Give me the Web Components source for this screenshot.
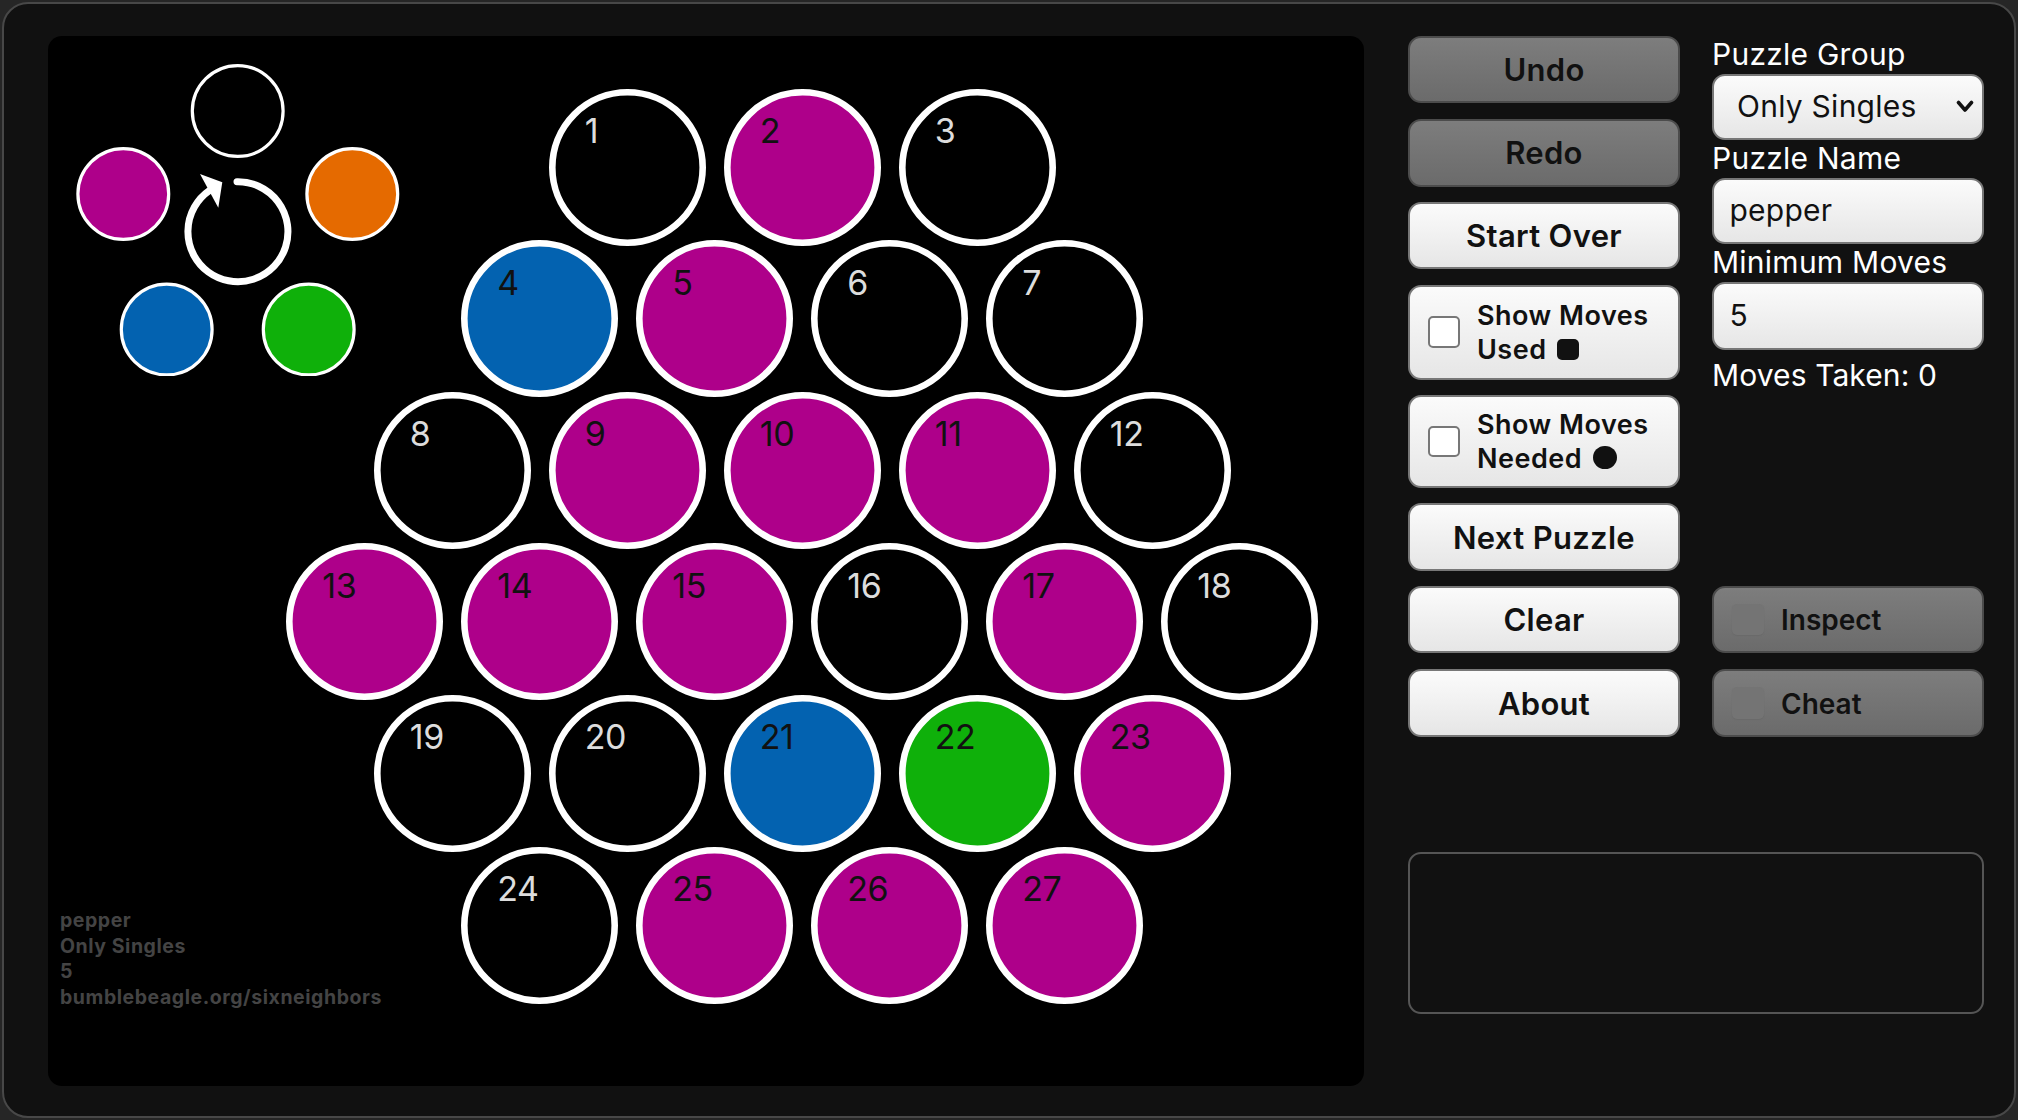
<!DOCTYPE html>
<html>
<head>
<meta charset="utf-8">
<title>Six Neighbors</title>
<style>
  html, body { margin: 0; padding: 0; width: 2018px; height: 1120px; overflow: hidden; background: #262626; }
  body { font-family: Inter, "Liberation Sans", sans-serif; }
</style>
</head>
<body>
<six-app></six-app>
<script>
const FONT = 'Inter, "Liberation Sans", sans-serif';
const COLORS = {
  none: "transparent",
  purple: "#ae008a",
  blue: "#0362b0",
  green: "#0fb00a",
  orange: "#e56a00",
};

class HexCell extends HTMLElement {
  connectedCallback() {
    const color = COLORS[this.getAttribute("color") || "none"];
    const dark = this.getAttribute("color") ? "#111" : "#ddd";
    this.attachShadow({ mode: "open" }).innerHTML = `
    <style>
      :host { display: block; position: relative; width: 157px; height: 157px; flex: none; }
      svg { display: block; }
      span {
        position: absolute; left: 36px; top: 22.4px;
        font: 400 34px/40px ${FONT}; color: ${dark}; letter-spacing: -0.5px;
      }
    </style>
    <svg width="157" height="157" viewBox="0 0 157 157">
      <circle cx="78.5" cy="78.5" r="75.2" fill="${color}" stroke="#fff" stroke-width="6.6"/>
    </svg>
    <span>${this.getAttribute("n")}</span>`;
  }
}

class HexBoard extends HTMLElement {
  connectedCallback() {
    // color of each cell, row by row; "" is an empty cell
    const p = "purple", b = "blue", g = "green", e = "";
    const rows = [
      [500.8, [e, p, e]],
      [413.3, [b, p, e, e]],
      [325.8, [e, p, p, p, e]],
      [238.3, [p, p, p, e, p, e]],
      [325.8, [e, e, b, g, p]],
      [413.3, [e, p, p, p]],
    ];
    let n = 0;
    const html = rows.map(([left, cells]) =>
      `<div class="row" style="padding-left:${left}px">` +
      cells.map((c) => `<hex-cell n="${++n}" color="${c}"></hex-cell>`).join("") +
      `</div>`).join("");
    this.attachShadow({ mode: "open" }).innerHTML = `
    <style>
      :host { display: block; padding-top: 52.5px; }
      .row { display: flex; gap: 18px; height: 151.65px; }
    </style>
    ${html}`;
  }
}

class ColorWheel extends HTMLElement {
  connectedCallback() {
    this.attachShadow({ mode: "open" }).innerHTML = `
    <style>
      :host { display: block; position: absolute; left: 0; top: 0; }
      svg { display: block; }
    </style>
    <svg width="420" height="340" viewBox="48 36 420 340">
      <g stroke="#fff" stroke-width="3.2">
        <circle cx="237.7" cy="111" r="45.4" fill="#000"/>
        <circle cx="352.3" cy="194" r="45.4" fill="${COLORS.orange}"/>
        <circle cx="308.7" cy="329.5" r="45.4" fill="${COLORS.green}"/>
        <circle cx="166.7" cy="329.5" r="45.4" fill="${COLORS.blue}"/>
        <circle cx="123.3" cy="194" r="45.4" fill="${COLORS.purple}"/>
      </g>
      <path d="M237 181.7A50 50 0 1 1 209.3 190.7" fill="none" stroke="#fff" stroke-width="7" stroke-linecap="round"/>
      <polygon points="200,174 222.3,182.3 218.3,207.7" fill="#fff"/>
    </svg>`;
  }
}

class BoardCaption extends HTMLElement {
  connectedCallback() {
    this.attachShadow({ mode: "open" }).innerHTML = `
    <style>
      :host {
        display: block; position: absolute; left: 12px; top: 872px;
        font: 700 19.5px/25.7px ${FONT}; letter-spacing: 0.55px; color: #444;
      }
    </style>
    <slot></slot>`;
  }
}

class GameBoard extends HTMLElement {
  connectedCallback() {
    this.attachShadow({ mode: "open" }).innerHTML = `
    <style>
      :host {
        display: block; position: relative; flex: none; box-sizing: border-box;
        width: 1316px; height: 1050px; background: #000; border-radius: 14px;
      }
    </style>
    <color-wheel></color-wheel>
    <hex-board></hex-board>
    <slot></slot>`;
  }
}

class PanelButton extends HTMLElement {
  connectedCallback() {
    const h = this.getAttribute("h") || 67;
    this.attachShadow({ mode: "open" }).innerHTML = `
    <style>
      :host {
        display: flex; align-items: center; justify-content: center; box-sizing: border-box;
        width: 272px; height: ${h}px; flex: none; padding-top: 1.5px;
        border: 2px solid #777; border-radius: 13px;
        background: linear-gradient(#fbfbfb, #e6e6e6);
        color: #111; font: 600 31px/34px ${FONT}; letter-spacing: 0.3px;
      }
      :host([disabled]) {
        border-color: #4c4c4c;
        background: linear-gradient(#7d7d7d, #6b6b6b);
      }
    </style>
    <slot></slot>`;
  }
}

class ToggleButton extends HTMLElement {
  connectedCallback() {
    const h = this.getAttribute("h") || 67;
    const off = this.hasAttribute("disabled");
    const size = off ? "font-size: 28px; letter-spacing: 0;" : "";
    this.attachShadow({ mode: "open" }).innerHTML = `
    <style>
      :host {
        display: flex; align-items: center; box-sizing: border-box;
        width: 272px; height: ${h}px; flex: none; padding-left: 18px;
        border: 2px solid #777; border-radius: 13px;
        background: linear-gradient(#fbfbfb, #e6e6e6);
        color: #111; font: 600 27px/34px ${FONT}; letter-spacing: 0.5px; ${size}
      }
      :host([disabled]) {
        border-color: #4c4c4c;
        background: linear-gradient(#7d7d7d, #6b6b6b);
      }
      .box {
        flex: none; box-sizing: border-box; width: 31.5px; height: 31.5px; margin-right: 17.5px;
        border: 2px solid #777; border-radius: 5px; background: #fff;
      }
      .text { padding-top: 1.5px; }
      :host([disabled]) .box {
        border: 0; background: #747474; box-shadow: 0 1px 1px #6a6a6a;
      }
    </style>
    <div class="box"></div>
    <div class="text"><slot></slot></div>`;
  }
}

class MoveMark extends HTMLElement {
  connectedCallback() {
    const round = this.getAttribute("shape") === "round";
    this.attachShadow({ mode: "open" }).innerHTML = `
    <style>
      :host {
        display: inline-block; vertical-align: -1px; background: #111;
        margin-left: ${round ? 11 : 10}px;
        width: ${round ? 23.5 : 22}px; height: ${round ? 23 : 21}px;
        border-radius: ${round ? "50%" : "5px"};
      }
    </style>`;
  }
}

class FieldBox extends HTMLElement {
  connectedCallback() {
    const h = this.getAttribute("h") || 66.5;
    const pick = this.hasAttribute("select");
    this.attachShadow({ mode: "open" }).innerHTML = `
    <style>
      :host { display: block; flex: none; width: 272px; font: 400 30px/37.5px ${FONT}; letter-spacing: 0.25px; color: #fff; }
      .label { height: 37.5px; white-space: nowrap; }
      .box {
        display: flex; align-items: center; justify-content: space-between; box-sizing: border-box;
        height: ${h}px; padding: 0 8px 0 ${pick ? 23 : 15.5}px;
        border: 2px solid #777; border-radius: 13px;
        background: linear-gradient(#fbfbfb, #e6e6e6); color: #111;
      }
      svg { display: block; flex: none; }
    </style>
    <div class="label">${this.getAttribute("label")}</div>
    <div class="box">
      <span><slot></slot></span>
      ${pick ? `<svg width="18" height="13" viewBox="0 0 18 13"><path d="M2.5 2.5L9 10L15.5 2.5" fill="none" stroke="#111" stroke-width="3.6" stroke-linecap="round" stroke-linejoin="round"/></svg>` : ""}
    </div>`;
  }
}

class MessageBox extends HTMLElement {
  connectedCallback() {
    this.attachShadow({ mode: "open" }).innerHTML = `
    <style>
      :host {
        display: block; box-sizing: border-box; width: 576px; height: 162px;
        border: 2px solid #555; border-radius: 13px;
      }
    </style>
    <slot></slot>`;
  }
}

class ControlPanel extends HTMLElement {
  connectedCallback() {
    this.attachShadow({ mode: "open" }).innerHTML = `
    <style>
      :host { display: block; flex: none; width: 576px; }
      .cols { display: grid; grid-template-columns: 272px 272px; column-gap: 32px; height: 701px; }
      .left { display: flex; flex-direction: column; gap: 15.5px; }
      .right { display: flex; flex-direction: column; }
      .taken { margin-top: 8px; font: 400 30px/34px ${FONT}; letter-spacing: 0.1px; color: #fff; }
      .spacer { flex: 1; }
      .pair { display: flex; flex-direction: column; gap: 15.5px; }
      .msg { margin-top: 115px; }
    </style>
    <div class="cols">
      <div class="left"><slot name="left"></slot></div>
      <div class="right">
        <slot name="fields"></slot>
        <div class="taken">Moves Taken: 0</div>
        <div class="spacer"></div>
        <div class="pair"><slot name="dev"></slot></div>
      </div>
    </div>
    <div class="msg"><message-box></message-box></div>`;
  }
}

class SixApp extends HTMLElement {
  connectedCallback() {
    this.attachShadow({ mode: "open" }).innerHTML = `
    <style>
      :host {
        display: flex; gap: 44px; box-sizing: border-box; margin: 2px;
        width: 2014px; height: 1116px; padding: 32px 0 0 44px;
        background: #111; border: 2px solid #484848; border-radius: 26px;
      }
    </style>
    <game-board>
      <board-caption>pepper<br>Only Singles<br>5<br>bumblebeagle.org/sixneighbors</board-caption>
    </game-board>
    <control-panel>
      <panel-button slot="left" disabled>Undo</panel-button>
      <panel-button slot="left" h="68" disabled>Redo</panel-button>
      <panel-button slot="left">Start Over</panel-button>
      <toggle-button slot="left" h="95"><div>Show Moves<br>Used<move-mark></move-mark></div></toggle-button>
      <toggle-button slot="left" h="92.5"><div>Show Moves<br>Needed<move-mark shape="round"></move-mark></div></toggle-button>
      <panel-button slot="left" h="67.5">Next Puzzle</panel-button>
      <panel-button slot="left">Clear</panel-button>
      <panel-button slot="left" h="68.5">About</panel-button>
      <field-box slot="fields" label="Puzzle Group" select>Only Singles</field-box>
      <field-box slot="fields" label="Puzzle Name">pepper</field-box>
      <field-box slot="fields" label="Minimum Moves" h="68">5</field-box>
      <toggle-button slot="dev" disabled>Inspect</toggle-button>
      <toggle-button slot="dev" h="68.5" disabled>Cheat</toggle-button>
    </control-panel>`;
  }
}

customElements.define("hex-cell", HexCell);
customElements.define("hex-board", HexBoard);
customElements.define("color-wheel", ColorWheel);
customElements.define("board-caption", BoardCaption);
customElements.define("game-board", GameBoard);
customElements.define("panel-button", PanelButton);
customElements.define("toggle-button", ToggleButton);
customElements.define("move-mark", MoveMark);
customElements.define("field-box", FieldBox);
customElements.define("message-box", MessageBox);
customElements.define("control-panel", ControlPanel);
customElements.define("six-app", SixApp);
</script>
</body>
</html>
